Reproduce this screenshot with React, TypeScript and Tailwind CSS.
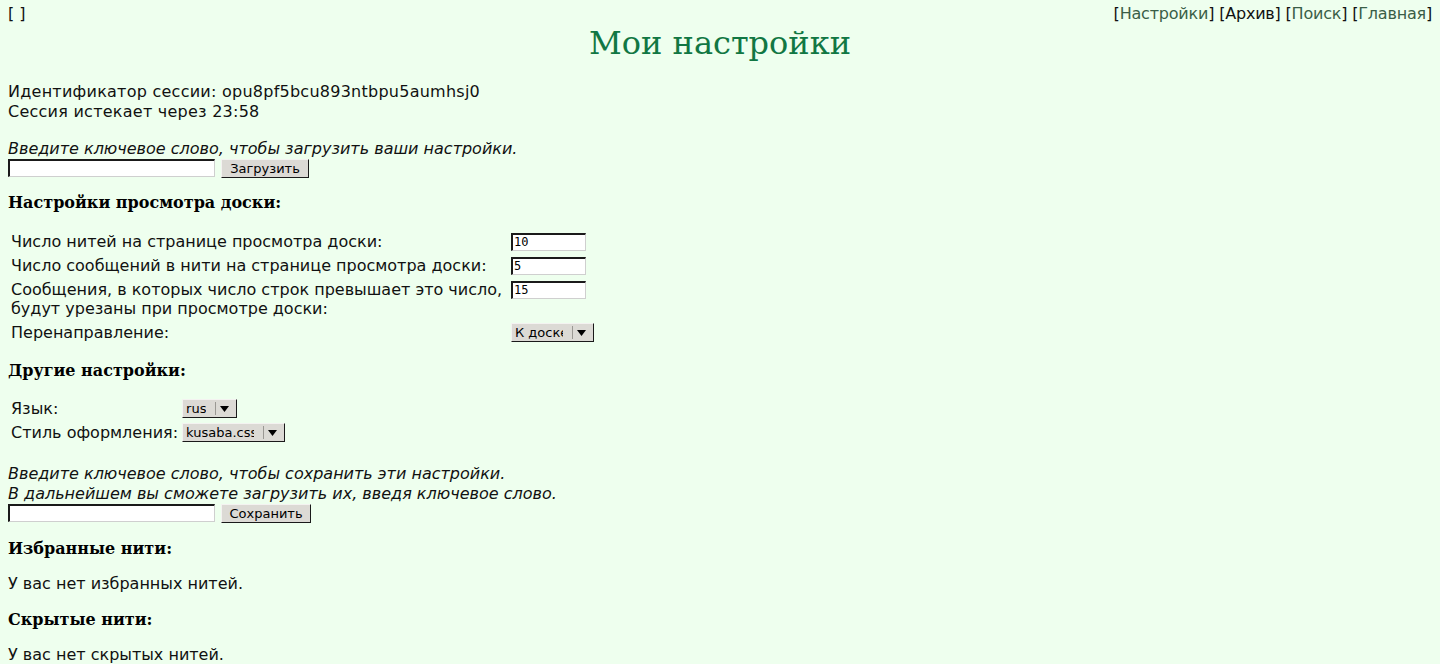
import React from "react";

const SANS = "font-['DejaVu_Sans',sans-serif]";

function TextInput({ w, value }: { w: string; value?: string }) {
  return (
    <div
      className={`${w} h-[18px] bg-white border-t-[2px] border-l-[2px] border-t-[#1a1a1a] border-l-[#1a1a1a] border-r border-b border-r-[#cfcfcf] border-b-[#cfcfcf] font-['DejaVu_Sans_Mono',monospace] text-[12px] leading-[14px] pl-[1px] text-black`}
    >
      {value}
    </div>
  );
}

function Button({ w, label }: { w: string; label: string }) {
  return (
    <div
      className={`${w} h-[19px] bg-[#dcdad5] border-t border-l border-t-[#f4f3f1] border-l-[#f4f3f1] border-r border-b border-r-[#1a1a1a] border-b-[#1a1a1a] flex items-center justify-center ${SANS} text-[13px] text-black`}
    >
      {label}
    </div>
  );
}

function Select({ w, label }: { w: string; label: string }) {
  return (
    <div
      className={`${w} h-[19px] bg-[#dcdad5] border-t border-l border-t-[#f4f3f1] border-l-[#f4f3f1] border-r border-b border-r-[#1a1a1a] border-b-[#1a1a1a] flex items-center ${SANS} text-[13px] text-black`}
    >
      <div className="flex-1 min-w-0 overflow-hidden whitespace-nowrap pl-[3px] mr-[9px] leading-[17px]">{label}</div>
      <div className="w-px h-[13px] bg-[#9a9893] mr-[4px] shrink-0" />
      <svg width="9" height="6" viewBox="0 0 9 6" className="mr-[7px] shrink-0">
        <polygon points="0,0 9,0 4.5,6" fill="#000" />
      </svg>
    </div>
  );
}

function Heading({ children, className = "" }: { children: React.ReactNode; className?: string }) {
  return (
    <div className={`font-['DejaVu_Serif',serif] font-bold text-[16px] leading-[20px] text-black ${className}`}>
      {children}
    </div>
  );
}

export default function App() {
  return (
    <div className={`min-h-[664px] w-full bg-[#eeffee] ${SANS} text-[16px] text-[#111] px-[8px] overflow-hidden`}>
      {/* top bar */}
      <div className="flex justify-between pt-[4px] leading-[20px]">
        <span>[ ]</span>
        <span className="tracking-[-0.2px]">
          [<span className="text-[#3a5e47]">Настройки</span>] [Архив] [<span className="text-[#3a5e47]">Поиск</span>] [
          <span className="text-[#3a5e47]">Главная</span>]
        </span>
      </div>
      <div className="text-center font-['DejaVu_Serif',serif] text-[32px] leading-[36px] text-[#117743] mt-px">
        Мои настройки
      </div>

      <div className="mt-[21px] leading-[20px] tracking-[0.25px]">
        <div>Идентификатор сессии: opu8pf5bcu893ntbpu5aumhsj0</div>
        <div>Сессия истекает через 23:58</div>
      </div>

      <div className="mt-[17px] italic leading-[20px]">Введите ключевое слово, чтобы загрузить ваши настройки.</div>
      <div className="flex items-start gap-[6px]">
        <TextInput w="w-[207px]" />
        <Button w="w-[88px]" label="Загрузить" />
      </div>

      <Heading className="mt-[15px]">Настройки просмотра доски:</Heading>

      <table className="mt-[15px] border-separate border-spacing-[2px] leading-[19px]">
        <tbody>
          <tr>
            <td className="p-[1px] align-top w-[498px] h-[22px] whitespace-nowrap"><div className="pt-px">Число нитей на странице просмотра доски:</div></td>
            <td className="p-[1px] align-top"><div className="pt-[2px]"><TextInput w="w-[75px]" value="10" /></div></td>
          </tr>
          <tr>
            <td className="p-[1px] align-top h-[22px] whitespace-nowrap"><div className="pt-px">Число сообщений в нити на странице просмотра доски:</div></td>
            <td className="p-[1px] align-top"><div className="pt-[2px]"><TextInput w="w-[75px]" value="5" /></div></td>
          </tr>
          <tr>
            <td className="p-[1px] align-top whitespace-nowrap"><div className="pt-px">Сообщения, в которых число строк превышает это число,<br />будут урезаны при просмотре доски:</div></td>
            <td className="p-[1px] align-top"><div className="pt-[2px]"><TextInput w="w-[75px]" value="15" /></div></td>
          </tr>
          <tr>
            <td className="p-[1px] align-top h-[22px] whitespace-nowrap"><div className="pt-px">Перенаправление:</div></td>
            <td className="p-[1px] align-top"><div className="pt-[1px]"><Select w="w-[83px]" label="К доске" /></div></td>
          </tr>
        </tbody>
      </table>

      <Heading className="mt-[16px]">Другие настройки:</Heading>

      <table className="mt-[14px] border-separate border-spacing-[2px] leading-[19px]">
        <tbody>
          <tr>
            <td className="p-[1px] align-top h-[22px] whitespace-nowrap"><div className="pt-px">Язык:</div></td>
            <td className="p-[1px] align-top"><div className="pt-[1px]"><Select w="w-[55px]" label="rus" /></div></td>
          </tr>
          <tr>
            <td className="p-[1px] align-top h-[22px] whitespace-nowrap"><div className="pt-px">Стиль оформления:</div></td>
            <td className="p-[1px] align-top"><div className="pt-[1px]"><Select w="w-[103px]" label="kusaba.css" /></div></td>
          </tr>
        </tbody>
      </table>

      <div className="mt-[19px] italic leading-[20px]">
        <div>Введите ключевое слово, чтобы сохранить эти настройки.</div>
        <div>В дальнейшем вы сможете загрузить их, введя ключевое слово.</div>
      </div>
      <div className="flex items-start gap-[6px]">
        <TextInput w="w-[207px]" />
        <Button w="w-[90px]" label="Сохранить" />
      </div>

      <Heading className="mt-[16px]">Избранные нити:</Heading>
      <div className="mt-[15px] leading-[20px]">У вас нет избранных нитей.</div>
      <Heading className="mt-[16px]">Скрытые нити:</Heading>
      <div className="mt-[15px] leading-[20px]">У вас нет скрытых нитей.</div>
    </div>
  );
}
